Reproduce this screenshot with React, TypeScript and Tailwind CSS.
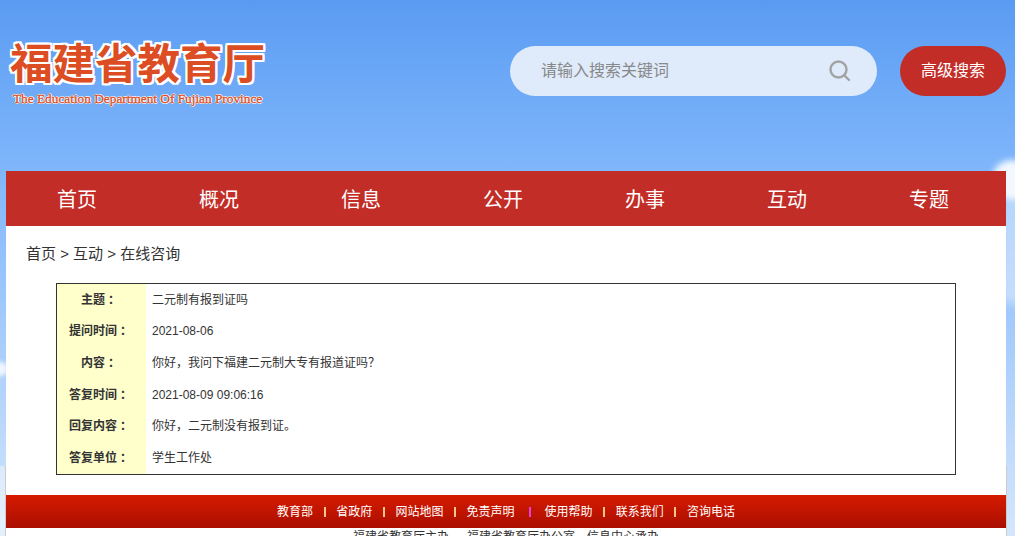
import React from 'react'

const navItems = ['首页', '概况', '信息', '公开', '办事', '互动', '专题']

const rows = [
  ['主题', '二元制有报到证吗'],
  ['提问时间', '2021-08-06'],
  ['内容', '你好，我问下福建二元制大专有报道证吗？'],
  ['答复时间', '2021-08-09 09:06:16'],
  ['回复内容', '你好，二元制没有报到证。'],
  ['答复单位', '学生工作处'],
]

const footerLinks = ['教育部', '省政府', '网站地图', '免责声明', '使用帮助', '联系我们', '咨询电话']

const cjk = "font-['Liberation_Sans','Noto_Sans_CJK_SC',sans-serif]"

export default function App() {
  return (
    <div className={`relative h-[536px] w-[1015px] overflow-hidden bg-gradient-to-b from-[#5a9bf2] from-0% via-[#80b7fb] via-[32%] to-[#d4e6fb] to-100% ${cjk}`}>
      {/* clouds behind the page */}
      <div className="absolute left-[992px] top-[160px] h-[40px] w-[40px] rounded-full bg-white/90 blur-[3px]" />
      <div className="absolute left-[1000px] top-[195px] h-[110px] w-[30px] rounded-full bg-white/40 blur-[5px]" />
      <div className="absolute left-[-10px] top-[362px] h-[14px] w-[18px] rounded-full bg-white/80 blur-[2px]" />
      <div className="absolute left-[-6px] top-[466px] h-[70px] w-[11px] bg-white/40" />
      <div className="absolute left-[5px] top-[466px] h-[70px] w-px bg-[#cccccc]" />
      <div className="absolute left-[1006px] top-[466px] h-[70px] w-px bg-[#cccccc]" />

      {/* Header */}
      <div className="relative flex h-[171px] w-[1006px] items-start justify-between">
        <div className="ml-[10px] mt-[37px] flex w-[260px] flex-col">
          <h1 className="whitespace-nowrap text-[42.5px] font-bold leading-[48px] text-[#dc4d23] font-['Noto_Sans_CJK_SC',serif] [text-shadow:2px_0_0_#fff,-2px_0_0_#fff,0_2px_0_#fff,0_-2px_0_#fff,2px_2px_0_#fff,-2px_-2px_0_#fff,2px_-2px_0_#fff,-2px_2px_0_#fff]">
            福建省教育厅
          </h1>
          <p className="mt-[3px] whitespace-nowrap pl-[3px] font-['Liberation_Serif',serif] text-[13.3px] leading-[22px] text-[#dc4d23] [-webkit-text-stroke:0.3px_#dc4d23] [text-shadow:1px_0_0_#fff,-1px_0_0_#fff,0_1px_0_#fff,0_-1px_0_#fff]">
            The Education Department Of Fujian Province
          </p>
        </div>
        <div className="mt-[46px] flex items-center gap-[23px]">
          <div className="flex h-[50px] w-[367px] items-center justify-between rounded-[25px] bg-[#dfebfb] pl-[31px] pr-[26px]">
            <span className="text-[16px] text-[#888888]">请输入搜索关键词</span>
            <svg width="22" height="22" viewBox="0 0 22 22" fill="none" stroke="#a3a3a3" strokeWidth="2.4" strokeLinecap="round">
              <circle cx="9.5" cy="9.5" r="8" />
              <path d="M15.5 15.5L20 20" />
            </svg>
          </div>
          <button className="h-[50px] w-[106px] rounded-[25px] bg-[#c32d28] text-[16px] text-white">高级搜索</button>
        </div>
      </div>

      {/* Nav */}
      <div className="relative ml-[6px] flex h-[55px] w-[1000px] items-center bg-[#c32d28] pt-[2px]">
        {navItems.map((item) => (
          <div key={item} className="w-[142px] text-center text-[20px] text-white">
            {item}
          </div>
        ))}
      </div>

      {/* Main */}
      <div className="relative ml-[6px] h-[269px] w-[1000px] bg-white">
        <div className="pb-[1px] pl-[20px] pt-[17px] text-[15px] leading-[21px] text-[#333333]">首页 &gt; 互动 &gt; 在线咨询</div>
        <div className="ml-[50px] mt-[18px] w-[900px] border border-[#333333]">
          {rows.map(([label, value]) => (
            <div key={label} className="flex h-[31.6px] items-center text-[12px]">
              <div className="flex h-full w-[89px] items-center justify-center bg-[#ffffcc] pr-[2px] font-bold text-[#333333]">
                {label}
                <span className="ml-[3px]">：</span>
              </div>
              <div className="pl-[6px] text-[#333333]">{value}</div>
            </div>
          ))}
        </div>
      </div>

      {/* Footer */}
      <div className="relative ml-[6px] flex h-[33px] w-[1000px] items-center justify-center bg-gradient-to-b from-[#d61b00] to-[#aa0e00] text-[12px] text-white">
        {footerLinks.map((link, i) => (
          <React.Fragment key={link}>
            <span>{link}</span>
            {i < footerLinks.length - 1 && (
              <span className={i === 3 ? 'mx-[14px] h-[10px] w-[2px] bg-[#e040e0]' : 'mx-[10.6px] h-[10px] w-[2px] bg-[#f5c58a]'} />
            )}
          </React.Fragment>
        ))}
      </div>
      <div className="relative ml-[6px] h-[8px] w-[1000px] overflow-hidden bg-white text-center text-[12px] leading-[18px] text-[#333333]">
        福建省教育厅主办<span className="mx-[9px]"></span>福建省教育厅办公室、信息中心承办
      </div>
    </div>
  )
}
